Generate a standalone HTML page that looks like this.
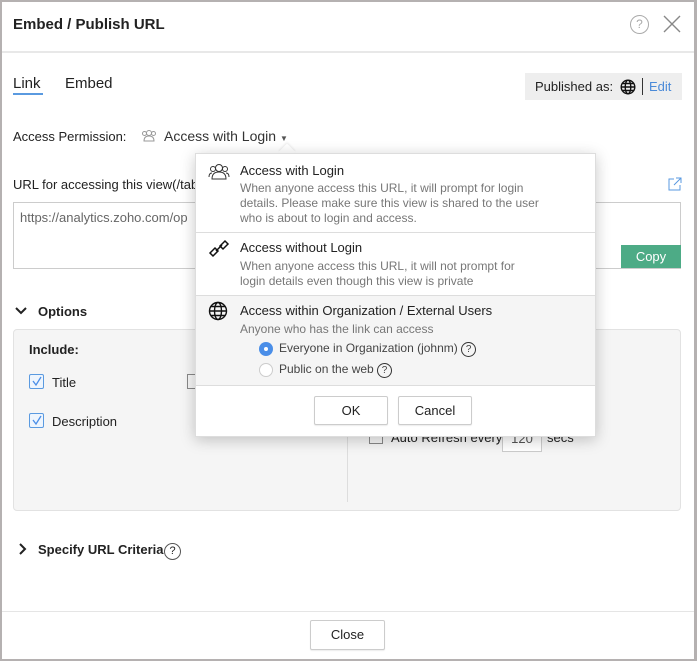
<!DOCTYPE html>
<html><head><style>
*{box-sizing:border-box;margin:0;padding:0}
body{width:697px;height:661px;background:#b5b1b1;font-family:"Liberation Sans",sans-serif;color:#222;position:relative;overflow:hidden}
.dlg{position:absolute;left:2px;top:2px;width:692px;height:657px;background:#fff}
.a{position:absolute;white-space:nowrap}
.q{display:inline-block;width:17px;height:17px;border:1px solid #333;border-radius:50%;font-size:11px;text-align:center;line-height:15px}
.btn{position:absolute;border:1px solid #ccc;border-radius:2px;background:#fff;font-size:13px;text-align:center;box-shadow:0 1px 1px rgba(0,0,0,.08)}
.cb{position:absolute;width:15px;height:15px;border:1px solid #5a9ae0;background:#eef5fd;border-radius:2px}
.sub{font-size:12px;color:#777;line-height:15px}
</style></head><body>
<div class="dlg">
<div class="a" style="left:11px;top:14px;font-size:15px;font-weight:bold">Embed / Publish URL</div>
<div class="a" style="left:628px;top:13px;width:19px;height:19px;border:1px solid #aaa;border-radius:50%;color:#aaa;font-size:12px;text-align:center;line-height:17px">?</div>
<svg class="a" style="left:661px;top:13px" width="18" height="18"><path d="M1 1L17 17M17 1L1 17" stroke="#888" stroke-width="1.4"/></svg>
<div class="a" style="left:0;top:49px;width:692px;height:2px;background:#e8e8e8"></div>
<div class="a" style="left:11px;top:73px;font-size:15px">Link</div>
<div class="a" style="left:11px;top:91px;width:30px;height:2px;background:#5a9ae0"></div>
<div class="a" style="left:63px;top:73px;font-size:15px">Embed</div>
<div class="a" style="left:523px;top:71px;width:157px;height:27px;background:#eee;font-size:13px;padding:6px 0 0 10px">Published as:</div>
<svg class="a" style="left:618px;top:77px" width="16" height="16"><g stroke="#111" stroke-width="1.4" fill="none"><circle cx="8" cy="8" r="6.8"/><ellipse cx="8" cy="8" rx="2.8" ry="6.8"/><path d="M1.2 8H14.8M2.5 4.5H13.5M2.5 11.5H13.5"/></g></svg>
<div class="a" style="left:640px;top:76px;width:1px;height:17px;background:#333"></div>
<div class="a" style="left:647px;top:77px;font-size:13px;color:#4a8ad8">Edit</div>
<div class="a" style="left:11px;top:127px;font-size:13px">Access Permission:</div>
<svg class="a" style="left:139px;top:127px" width="16" height="13"><g stroke="#999" fill="none"><circle cx="8" cy="4" r="2.5"/><path d="M3 12C3 8.5 5 7 8 7C11 7 13 8.5 13 12Z"/><circle cx="3.5" cy="4.5" r="2"/><circle cx="12.5" cy="4.5" r="2"/></g></svg>
<div class="a" style="left:162px;top:126px;font-size:14px;color:#333">Access with Login <span style="font-size:8px;color:#555">&#9660;</span></div>
<div class="a" style="left:11px;top:175px;font-size:13px">URL for accessing this view(/tab</div>
<svg class="a" style="left:666px;top:175px" width="14" height="14"><path d="M6 2H1V13H12V8M8 1H13V6M13 1L6 8" stroke="#5a9ae0" fill="none"/></svg>
<div class="a" style="left:11px;top:200px;width:668px;height:67px;border:1px solid #ccc;padding:7px 6px;font-size:13px;color:#666">https://analytics.zoho.com/op</div>
<div class="a" style="left:619px;top:243px;width:60px;height:23px;background:#4dab86;color:#fff;font-size:13px;text-align:center;line-height:23px">Copy</div>
<svg class="a" style="left:13px;top:304px" width="12" height="10"><path d="M1 2L6 7L11 2" stroke="#222" stroke-width="2" fill="none"/></svg>
<div class="a" style="left:36px;top:302px;font-size:13px;font-weight:bold">Options</div>
<div class="a" style="left:11px;top:327px;width:668px;height:182px;background:#f5f5f5;border:1px solid #e2e2e2;border-radius:4px"></div>
<div class="a" style="left:345px;top:335px;width:1px;height:165px;background:#ddd"></div>
<div class="a" style="left:27px;top:340px;font-size:13px;font-weight:bold">Include:</div>
<div class="cb" style="left:27px;top:372px"><svg width="13" height="13"><path d="M3 6L6 10L11 2" stroke="#4a8ee8" stroke-width="1.3" fill="none"/></svg></div><div class="a" style="left:50px;top:373px;font-size:13px">Title</div>
<div class="a" style="left:185px;top:372px;width:10px;height:15px;border:1px solid #888;border-right:none"></div>
<div class="cb" style="left:27px;top:411px"><svg width="13" height="13"><path d="M3 6L6 10L11 2" stroke="#4a8ee8" stroke-width="1.3" fill="none"/></svg></div><div class="a" style="left:50px;top:412px;font-size:13px">Description</div>
<div class="a" style="left:367px;top:428px;width:14px;height:14px;border:1px solid #888"></div>
<div class="a" style="left:389px;top:428px;font-size:13px">Auto Refresh every</div>
<div class="a" style="left:500px;top:428px;width:40px;height:22px;border:1px solid #ccc;background:#fff;font-size:13px;text-align:center;color:#555">120</div>
<div class="a" style="left:545px;top:428px;font-size:13px">secs</div>
<svg class="a" style="left:16px;top:541px" width="10" height="12"><path d="M2 1L7 6L2 11" stroke="#222" stroke-width="2" fill="none"/></svg>
<div class="a" style="left:36px;top:540px;font-size:13px;font-weight:bold">Specify URL Criteria</div>
<div class="a" style="left:162px;top:539px"><span class="q" style="border-color:#555">?</span></div>
<div class="a" style="left:0;top:609px;width:692px;height:1px;background:#e5e5e5"></div>
<div class="btn" style="left:308px;top:618px;width:75px;height:30px;line-height:28px">Close</div>
</div>
<!-- dropdown -->
<div class="a" style="left:281px;top:146px;width:12px;height:12px;background:#fff;transform:rotate(45deg);box-shadow:-1px -1px 2px rgba(0,0,0,.08)"></div>
<div class="a" style="left:195px;top:153px;width:401px;height:284px;background:#fff;border:1px solid #ddd;box-shadow:0 3px 14px rgba(0,0,0,.22)">
<div class="a" style="left:0;top:0;width:399px;height:79px;border-bottom:1px solid #ddd"></div>
<svg class="a" style="left:12px;top:9px" width="22" height="18"><g stroke="#333" fill="none"><circle cx="11" cy="5" r="3.5"/><path d="M4 16C4 11 7 9 11 9C15 9 18 11 18 16Z"/><circle cx="5" cy="6" r="2.5"/><circle cx="17" cy="6" r="2.5"/><path d="M1 14C1 11 2 10 4 10M21 14C21 11 20 10 18 10"/></g></svg>
<div class="a" style="left:44px;top:9px;font-size:13px">Access with Login</div>
<div class="a sub" style="left:44px;top:27px">When anyone access this URL, it will prompt for login<br>details. Please make sure this view is shared to the user<br>who is about to login and access.</div>
<svg class="a" style="left:12px;top:85px" width="22" height="20"><g stroke="#111" stroke-width="1.5" fill="none"><path d="M2 14L7 9L10 12L5 17Z"/><path d="M12 7L17 2L20 5L15 10Z"/><path d="M8 12L14 6"/></g></svg>
<div class="a" style="left:44px;top:86px;font-size:13px">Access without Login</div>
<div class="a sub" style="left:44px;top:105px">When anyone access this URL, it will not prompt for<br>login details even though this view is private</div>
<div class="a" style="left:0;top:141px;width:399px;height:91px;background:#f5f5f5;border-top:1px solid #ddd;border-bottom:1px solid #ddd"></div>
<svg class="a" style="left:12px;top:147px" width="20" height="20"><g stroke="#111" stroke-width="1.4" fill="none"><circle cx="10" cy="10" r="8.5"/><ellipse cx="10" cy="10" rx="3.5" ry="8.5"/><path d="M1.5 10H18.5M3 5.5H17M3 14.5H17"/></g></svg>
<div class="a" style="left:44px;top:149px;font-size:13px">Access within Organization / External Users</div>
<div class="a sub" style="left:44px;top:168px">Anyone who has the link can access</div>
<div class="a" style="left:63px;top:188px;width:14px;height:14px;border-radius:50%;background:#4a8ee8"><div style="width:4px;height:4px;background:#fff;border-radius:50%;margin:5px"></div></div>
<div class="a" style="left:83px;top:187px;font-size:12px;color:#444">Everyone in Organization (johnm) <span class="q" style="width:15px;height:15px;font-size:10px;line-height:13px">?</span></div>
<div class="a" style="left:63px;top:209px;width:14px;height:14px;border-radius:50%;border:1px solid #ccc;background:#fff"></div>
<div class="a" style="left:83px;top:208px;font-size:12px;color:#444">Public on the web <span class="q" style="width:15px;height:15px;font-size:10px;line-height:13px">?</span></div>
<div class="btn" style="left:118px;top:242px;width:74px;height:29px;line-height:27px">OK</div>
<div class="btn" style="left:202px;top:242px;width:74px;height:29px;line-height:27px">Cancel</div>
</div>
</body></html>
